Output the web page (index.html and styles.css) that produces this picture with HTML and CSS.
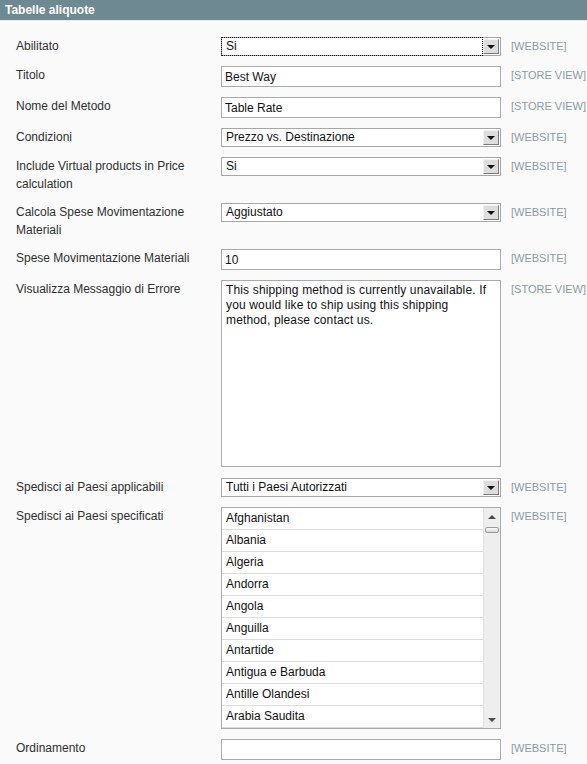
FILE: index.html
```html
<!DOCTYPE html>
<html lang="it">
<head>
<meta charset="utf-8">
<title>Tabelle aliquote</title>
<link rel="stylesheet" href="styles.css">
</head>
<body>
<div class="panel">
  <div class="head"><h4>Tabelle aliquote</h4></div>
  <div class="form">
    <div class="row">
      <div class="label">Abilitato</div>
      <div class="value"><div class="select focus"><span class="sel-text">Si</span><span class="arrow"></span></div></div>
      <div class="scope">[WEBSITE]</div>
    </div>
    <div class="row">
      <div class="label">Titolo</div>
      <div class="value"><input class="input" type="text" value="Best Way"></div>
      <div class="scope">[STORE VIEW]</div>
    </div>
    <div class="row">
      <div class="label">Nome del Metodo</div>
      <div class="value"><input class="input" type="text" value="Table Rate"></div>
      <div class="scope">[STORE VIEW]</div>
    </div>
    <div class="row">
      <div class="label">Condizioni</div>
      <div class="value"><div class="select"><span class="sel-text">Prezzo vs. Destinazione</span><span class="arrow"></span></div></div>
      <div class="scope">[WEBSITE]</div>
    </div>
    <div class="row">
      <div class="label">Include Virtual products in Price calculation</div>
      <div class="value"><div class="select"><span class="sel-text">Si</span><span class="arrow"></span></div></div>
      <div class="scope">[WEBSITE]</div>
    </div>
    <div class="row">
      <div class="label">Calcola Spese Movimentazione Materiali</div>
      <div class="value"><div class="select"><span class="sel-text">Aggiustato</span><span class="arrow"></span></div></div>
      <div class="scope">[WEBSITE]</div>
    </div>
    <div class="row">
      <div class="label">Spese Movimentazione Materiali</div>
      <div class="value"><input class="input" type="text" value="10"></div>
      <div class="scope">[WEBSITE]</div>
    </div>
    <div class="row">
      <div class="label">Visualizza Messaggio di Errore</div>
      <div class="value"><textarea class="textarea">This shipping method is currently unavailable. If you would like to ship using this shipping method, please contact us.</textarea></div>
      <div class="scope">[STORE VIEW]</div>
    </div>
    <div class="row">
      <div class="label">Spedisci ai Paesi applicabili</div>
      <div class="value"><div class="select"><span class="sel-text">Tutti i Paesi Autorizzati</span><span class="arrow"></span></div></div>
      <div class="scope">[WEBSITE]</div>
    </div>
    <div class="row">
      <div class="label">Spedisci ai Paesi specificati</div>
      <div class="value">
        <div class="multi">
          <div class="opts">
            <div class="opt">Afghanistan</div>
            <div class="opt">Albania</div>
            <div class="opt">Algeria</div>
            <div class="opt">Andorra</div>
            <div class="opt">Angola</div>
            <div class="opt">Anguilla</div>
            <div class="opt">Antartide</div>
            <div class="opt">Antigua e Barbuda</div>
            <div class="opt">Antille Olandesi</div>
            <div class="opt">Arabia Saudita</div>
          </div>
          <div class="sb">
            <div class="sb-btn"><span class="tri-up"></span></div>
            <div class="thumb"></div>
            <div class="track"></div>
            <div class="sb-btn"><span class="tri-down"></span></div>
          </div>
        </div>
      </div>
      <div class="scope">[WEBSITE]</div>
    </div>
    <div class="row">
      <div class="label">Ordinamento</div>
      <div class="value"><input class="input" type="text" value=""></div>
      <div class="scope">[WEBSITE]</div>
    </div>
  </div>
</div>
</body>
</html>
```

FILE: styles.css
```css
html, body {
  margin: 0;
  padding: 0;
  background: #fafafa;
  font-family: "Liberation Sans", Arial, sans-serif;
  font-size: 12px;
  color: #2f2f2f;
  overflow: hidden;
}

.head {
  background: #6f8992;
  height: 20px;
  border-bottom: 1px solid #e6e9ea;
}

.head h4 {
  margin: 0;
  padding-left: 5px;
  font-size: 12px;
  line-height: 20px;
  font-weight: bold;
  color: #ffffff;
}

.form {
  display: flex;
  flex-direction: column;
  gap: 10px;
  padding: 16px 0 0 16px;
}

.row {
  display: flex;
  align-items: flex-start;
}

.label {
  width: 190px;
  margin-right: 15px;
  line-height: 18px;
  color: #2f2f2f;
}

.value {
  width: 280px;
}

.scope {
  margin-left: 10px;
  font-size: 11px;
  line-height: 18px;
  color: #8a9ca5;
  white-space: nowrap;
}

.input {
  display: block;
  box-sizing: border-box;
  width: 280px;
  height: 21px;
  margin: 0;
  padding: 0 3px;
  border: 1px solid #aaaaaa;
  background: #ffffff;
  font-family: "Liberation Sans", Arial, sans-serif;
  font-size: 12px;
  color: #111111;
  outline: none;
}

.select {
  box-sizing: border-box;
  width: 280px;
  height: 19px;
  border: 1px solid #a7a7a7;
  background: #ffffff;
  display: flex;
}

.sel-text {
  flex: 1;
  padding-left: 4px;
  line-height: 17px;
  color: #111111;
}

.select.focus .sel-text {
  outline: 1px dotted #111111;
  outline-offset: 0;
}

.arrow {
  box-sizing: border-box;
  width: 16px;
  height: 15px;
  margin: 1px;
  background: #dddddd;
  border-top: 1px solid #f2f2f2;
  border-left: 1px solid #f2f2f2;
  border-right: 1px solid #7a7a7a;
  border-bottom: 1px solid #7a7a7a;
  display: flex;
  align-items: center;
  justify-content: center;
}

.arrow::after {
  content: "";
  width: 0;
  height: 0;
  border-left: 4px solid transparent;
  border-right: 4px solid transparent;
  border-top: 4px solid #111111;
}

.textarea {
  display: block;
  box-sizing: border-box;
  width: 280px;
  height: 187px;
  margin: 0;
  padding: 2px 12px 2px 4px;
  border: 1px solid #aaaaaa;
  background: #ffffff;
  font-family: "Liberation Sans", Arial, sans-serif;
  font-size: 12px;
  letter-spacing: 0.15px;
  line-height: 15px;
  color: #111111;
  resize: none;
  overflow: hidden;
  outline: none;
  margin-bottom: 1px;
}

.multi {
  box-sizing: border-box;
  width: 280px;
  height: 222px;
  border: 1px solid #aaaaaa;
  background: #ffffff;
  display: flex;
  overflow: hidden;
}

.opts {
  flex: 1;
}

.opt {
  height: 21px;
  line-height: 21px;
  border-bottom: 1px solid #dddddd;
  padding-left: 4px;
  color: #111111;
}

.sb {
  width: 16px;
  background: #eeeeee;
  border-left: 1px solid #e2e2e2;
  display: flex;
  flex-direction: column;
}

.sb-btn {
  height: 17px;
  display: flex;
  align-items: center;
  justify-content: center;
}

.tri-up {
  width: 0;
  height: 0;
  border-left: 4px solid transparent;
  border-right: 4px solid transparent;
  border-bottom: 4px solid #4a4a4a;
}

.tri-down {
  width: 0;
  height: 0;
  border-left: 4px solid transparent;
  border-right: 4px solid transparent;
  border-top: 4px solid #4a4a4a;
}

.thumb {
  height: 6px;
  margin: 2px 1px 0 1px;
  box-sizing: border-box;
  border: 1px solid #9a9a9a;
  border-radius: 2px;
  background: linear-gradient(#fbfbfb, #d8d8d8);
}

.track {
  flex: 1;
}
```
